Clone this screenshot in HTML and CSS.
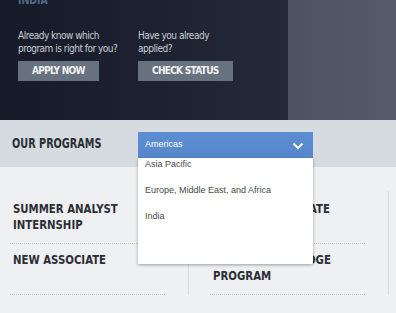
FILE: index.html
```html
<!DOCTYPE html>
<html>
<head>
<meta charset="utf-8">
<link rel="stylesheet" href="styles.css">
</head>
<body>
<div class="hero">
  <div class="hero-main">
    <div class="region">INDIA</div>
    <div class="ctas">
      <div class="cta">
        <p>Already know which<br>program is right for you?</p>
        <a class="btn">APPLY NOW</a>
      </div>
      <div class="cta">
        <p>Have you already<br>applied?</p>
        <a class="btn">CHECK STATUS</a>
      </div>
    </div>
  </div>
  <div class="hero-side"></div>
</div>
<div class="band">
  <div class="band-label"><span class="squeeze">OUR PROGRAMS</span></div>
  <div class="select">
    <div class="select-head">
      <span>Americas</span>
      <svg class="chev" width="12" height="8" viewBox="0 0 12 8"><path d="M1.5 1.5 L6 6 L10.5 1.5" fill="none" stroke="#fff" stroke-width="2"/></svg>
    </div>
    <ul class="select-list">
      <li>Asia Pacific</li>
      <li>Europe, Middle East, and Africa</li>
      <li>India</li>
    </ul>
  </div>
</div>
<div class="programs">
  <div class="col">
    <div class="item"><span class="title">SUMMER ANALYST<br>INTERNSHIP</span></div>
    <div class="item"><span class="title">NEW ASSOCIATE</span></div>
  </div>
  <div class="col col2">
    <div class="item"><span class="title">SUMMER ASSOCIATE</span></div>
    <div class="item"><span class="title">COMMUNITY BRIDGE<br>PROGRAM</span></div>
  </div>
</div>
</body>
</html>
```
FILE: styles.css
```css
* { box-sizing: border-box; }
html, body { margin: 0; padding: 0; }
body {
  width: 396px;
  height: 313px;
  overflow: hidden;
  background: #eff0f2;
  font-family: "Liberation Sans", Arial, sans-serif;
}
.hero {
  display: flex;
  height: 120px;
}
.hero-main {
  flex: 1;
  background: linear-gradient(90deg, #171b28 0%, #1e2231 60%, #252a39 100%);
  padding-left: 18px;
  overflow: hidden;
}
.hero-side {
  width: 108px;
  background: linear-gradient(90deg, #4c5260 0%, #555b68 100%);
}
.region {
  font-family: "DejaVu Sans Condensed", sans-serif;
  font-weight: bold;
  font-size: 13px;
  line-height: 13px;
  color: #52698a;
  margin-top: -7px;
  transform: scaleX(0.8);
  transform-origin: 0 50%;
}
.ctas {
  display: flex;
  margin-top: 23px;
}
.cta {
  width: 120px;
}
.cta p {
  margin: 0;
  white-space: nowrap;
  font-family: "DejaVu Sans Condensed", sans-serif;
  font-size: 10px;
  letter-spacing: -0.5px;
  line-height: 13px;
  color: #c9cdd4;
}
.btn {
  display: inline-block;
  margin-top: 6px;
  height: 20px;
  line-height: 20px;
  padding: 0 14px;
  background: #68727f;
  color: #f2f3f5;
  font-family: "DejaVu Sans Condensed", sans-serif;
  font-weight: bold;
  font-size: 10px;
  letter-spacing: -0.7px;
}
.band {
  display: flex;
  align-items: flex-start;
  background: #d6dbe1;
  padding: 12px 0 9px 12px;
}
.band-label {
  width: 126px;
  line-height: 22px;
  font-family: "DejaVu Sans Condensed", sans-serif;
  font-weight: bold;
  font-size: 13.5px;
  color: #2a2e36;
}
.squeeze {
  display: block;
  white-space: nowrap;
  transform: scaleX(0.8);
  transform-origin: 0 50%;
}
.select {
  position: relative;
  width: 175px;
}
.select-head {
  height: 26px;
  display: flex;
  align-items: center;
  justify-content: space-between;
  padding: 0 9px 0 7px;
  background: linear-gradient(180deg, #5e8ed2 0%, #5787cb 100%);
  color: #fff;
  font-size: 9px;
}
.select-head span { margin-top: -3px; }
.chev { display: block; margin-top: 1px; }
.select-list {
  position: absolute;
  left: 0;
  top: 26px;
  width: 175px;
  height: 106px;
  margin: 0;
  padding: 0 0 0 7px;
  list-style: none;
  background: #fff;
  box-shadow: 0 1px 3px rgba(0, 0, 0, 0.35);
  z-index: 2;
}
.select-list li {
  font-size: 9px;
  line-height: 13px;
  margin-bottom: 13px;
  color: #4a4a4a;
}
.programs {
  display: flex;
  padding: 24px 0 0 10px;
}
.col {
  width: 179px;
  padding: 2px 23px 0 0;
  border-right: 1px solid #d9dadd;
}
.col2 {
  margin-left: 21px;
  width: 179px;
}
.item {
  height: 51px;
  padding: 8px 0 0 3px;
  border-bottom: 1px dotted #c4c6ca;
}
.title {
  display: block;
  white-space: nowrap;
  font-family: "DejaVu Sans Condensed", sans-serif;
  font-weight: bold;
  font-size: 13px;
  line-height: 16px;
  color: #2b2e34;
  transform: scaleX(0.87);
  transform-origin: 0 50%;
}
```
